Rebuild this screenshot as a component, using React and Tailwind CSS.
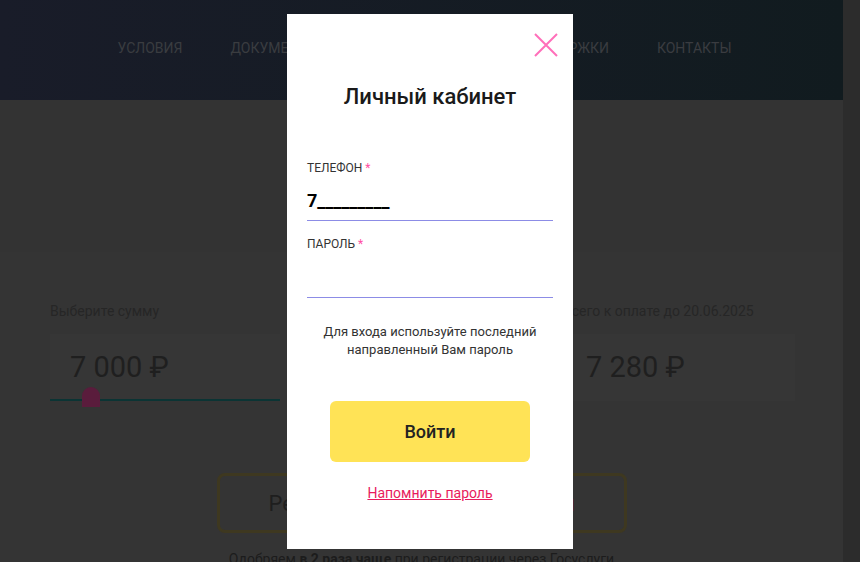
import React from 'react'

const nav = ['УСЛОВИЯ', 'ДОКУМЕНТЫ', 'КАК ПОЛУЧИТЬ', 'ПОДДЕРЖКИ', 'КОНТАКТЫ']

function AmountBox({ label, value, slider, pad = 'pl-[20px]' }) {
  return (
    <div className="w-full">
      <div className="text-[14px] leading-[18px] text-[#262626] whitespace-nowrap">{label}</div>
      <div className={`relative mt-[14px] h-[67px] bg-[#363636] flex items-center ${pad}`}>
        <span className="text-[29px] text-[#1f1f1f]">{value}</span>
        {slider && (
          <>
            <div className="absolute left-0 right-0 bottom-0 h-[2px] bg-[#0b3434]" />
            <div className="absolute left-[32px] top-[53px] w-[18px] h-[20px] rounded-t-full bg-[#5a1c3c]" />
          </>
        )}
      </div>
    </div>
  )
}

export default function App() {
  return (
    <div className="relative w-full h-[562px] overflow-hidden bg-[#333333] flex" style={{ fontFamily: 'Roboto, "Noto Sans", sans-serif' }}>
      <div className="w-[843px] flex flex-col">
        <header className="h-[100px] shrink-0 bg-gradient-to-r from-[#191c29] to-[#111b1f] flex items-start justify-center pl-[6px] pt-[39px]">
          <nav className="flex gap-[48px] text-[14px] leading-[18px] text-[#3a3c40]">
            {nav.map((n) => <span key={n}>{n}</span>)}
          </nav>
        </header>
        <div className="h-[152px] shrink-0" />
        <section className="flex-1 bg-[#343434] flex flex-col items-center">
          <div className="w-full flex justify-between pl-[50px] pr-[48px] pt-[50px]">
            <div className="w-[230px]">
              <AmountBox label="Выберите сумму" value="7 000 ₽" slider />
            </div>
            <div className="w-[232px]">
              <AmountBox label="Всего к оплате до 20.06.2025" value="7 280 ₽" pad="pl-[23px]" />
            </div>
          </div>
          <div className="mt-[72px] w-[410px] h-[60px] shrink-0 rounded-[8px] border-[3px] border-[#3e3820] flex items-center justify-center gap-2 text-[22px] text-[#1e1e1e]">
            <span>Регистрация через</span>
            <span className="text-[#5c1438] font-bold">Госуслуги</span>
          </div>
          <p className="mt-[16px] text-[14px] text-[#1c1c1c] whitespace-nowrap">
            Одобряем <b>в 2 раза чаще</b> при регистрации через Госуслуги
          </p>
        </section>
      </div>
      <div className="w-[17px] bg-[#2c2c2c]" />

      <div className="absolute left-[287px] top-[14px] w-[286px] h-[535px] bg-white flex flex-col px-[20px]">
        <button className="absolute right-[15px] top-[19px] w-[24px] h-[24px]">
          <svg viewBox="0 0 24 24" className="w-[24px] h-[24px]" stroke="#ff6fba" strokeWidth="2" fill="none">
            <path d="M1 1 L23 23 M23 1 L1 23" />
          </svg>
        </button>
        <h2 className="mt-[70px] text-center text-[22px] leading-[26px] font-medium text-[#1a1a1a]">Личный кабинет</h2>

        <label className="mt-[51px] text-[12px] leading-[14px] text-[#333]">ТЕЛЕФОН <span className="text-[#ff4fa3]">*</span></label>
        <div className="mt-[15px] h-[31px] border-b border-[#8c8ce6] text-[18px] font-bold text-black leading-[22px]">7_________</div>

        <label className="mt-[16px] text-[12px] leading-[14px] text-[#333]">ПАРОЛЬ <span className="text-[#ff4fa3]">*</span></label>
        <div className="mt-[16px] h-[31px] border-b border-[#8c8ce6]" />

        <p className="mt-[25px] text-center text-[13px] leading-[18px] text-[#333]">
          Для входа используйте последний<br />направленный Вам пароль
        </p>

        <button className="mt-[42px] mx-auto w-[200px] h-[61px] rounded-[6px] bg-[#ffe356] text-[18px] font-medium text-[#222]">Войти</button>

        <a className="mt-[22px] text-center text-[14px] leading-[18px] text-[#e81b5d] underline">Напомнить пароль</a>
      </div>
    </div>
  )
}
